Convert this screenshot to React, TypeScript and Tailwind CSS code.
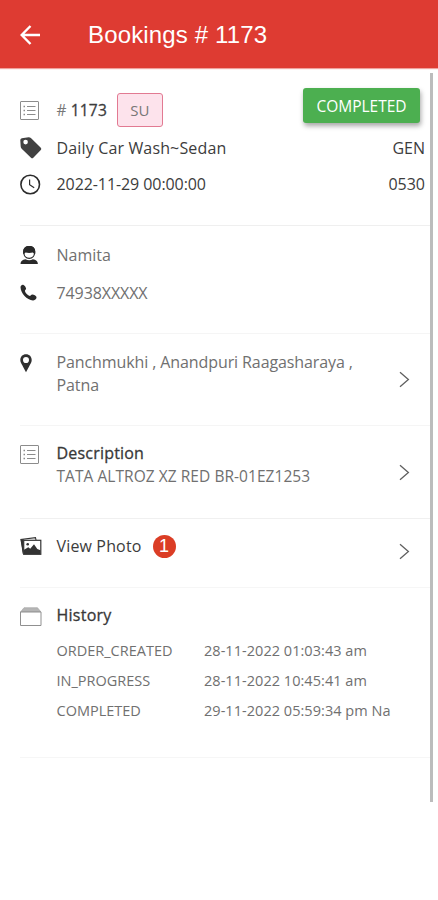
import type { ReactNode } from "react";

interface HistoryEntry {
  status: string;
  time: string;
}

const history: HistoryEntry[] = [
  { status: "ORDER_CREATED", time: "28-11-2022 01:03:43 am" },
  { status: "IN_PROGRESS", time: "28-11-2022 10:45:41 am" },
  { status: "COMPLETED", time: "29-11-2022 05:59:34 pm Na" },
];

function ListIcon() {
  return (
    <svg className="mt-[2px]" width="20" height="20" viewBox="0 0 20 20" fill="none" stroke="#8c8c8c">
      <rect x="0.5" y="0.5" width="18" height="18" rx="0.5" />
      <path d="M7 5.5h8.5M7 9.5h8.5M7 13.5h8.5" />
      <path d="M3.5 5.5h1.5M3.5 9.5h1.5M3.5 13.5h1.5" strokeWidth="1.3" />
    </svg>
  );
}

function TagIcon() {
  return (
    <svg width="22" height="22" viewBox="0 0 22 22" fill="#414141">
      <path
        fillRule="evenodd"
        d="M0.3 3.2Q0.2 1.6 1.8 1.2L8.6 0.2Q9.9 0.1 10.9 1L20.8 10.7Q21.9 11.9 20.8 13L13.3 20.8Q12.2 21.8 11 20.8L1.7 11.7Q0.8 10.8 0.7 9.6ZM5.6 2.8a2.3 2.3 0 1 0 0 4.6a2.3 2.3 0 0 0 0-4.6Z"
      />
    </svg>
  );
}

function ClockIcon() {
  return (
    <svg className="mt-px" width="22" height="22" viewBox="0 0 22 22" fill="none" stroke="#2c2c2c">
      <circle cx="10.2" cy="10.5" r="9.3" strokeWidth="1.6" />
      <path d="M9.6 5.5v5.2l4.6 3.1" strokeWidth="1.2" />
    </svg>
  );
}

function PersonIcon() {
  return (
    <svg width="19" height="20" viewBox="0 0 19 20">
      <path
        d="M3.7 6.8C3.7 3.2 5.9 1.7 9.2 1.7s5.5 1.5 5.5 5.1c0 3.8-2.3 6.6-5.5 6.6S3.7 10.6 3.7 6.8Z"
        fill="#fff"
        stroke="#292929"
        strokeWidth="1.2"
      />
      <path
        d="M3.2 9C2.6 3.6 5 1 9.2 1s6.6 2.6 6 8C14.2 8.900 13.400 8.300 12.900 7.600C10.400 8.200 7.900 8.200 5.500 7.600C5 8.300 4.300 8.800 3.200 9Z"
        fill="#292929"
      />
      <path d="M0.5 19c0.1-3 1.9-4.300 5-4.800 2.300 1.300 5.100 1.300 7.400 0 3.200 0.500 4.800 1.800 5 4.800Z" fill="#292929" />
    </svg>
  );
}

function PhoneIcon() {
  return (
    <svg width="18" height="18" viewBox="0 0 18 18" fill="#2b2b2b">
      <path d="M0.5 3.1C0.6 1.5 2 0.4 3.2 0.7C4.7 1.4 5.8 3 6.1 4.6C6.1 5.6 5 6.3 4.9 6.9C5.2 8.9 7.8 11.3 9.9 11.9C10.6 11.8 11 10.5 12.3 10.5C14.1 10.6 15.8 11.7 16.5 13.1C16.8 14.9 15 16.7 13 16.5C6.9 15.9 0.7 9.8 0.5 3.1Z" />
    </svg>
  );
}

function PinIcon() {
  return (
    <svg width="13" height="19" viewBox="0 0 13 19" fill="#303030">
      <path
        fillRule="evenodd"
        d="M6 0.3C2.6 0.3 0.3 2.7 0.3 5.9C0.3 8 1.3 9.4 2.3 11.3C3.5 13.5 4.4 15.7 6 18.2C7.6 15.7 8.5 13.5 9.7 11.3C10.7 9.4 11.7 8 11.7 5.9C11.7 2.7 9.4 0.3 6 0.3ZM6 2.9a3 3.1 0 1 1 0 6.2a3 3.1 0 0 1 0-6.2Z"
      />
    </svg>
  );
}

function PhotosIcon() {
  return (
    <svg width="22" height="19" viewBox="0 0 22 19">
      <path d="M3.4 15L0.9 2.5L15.5 0.7L16 3" fill="none" stroke="#333" strokeWidth="1.1" />
      <path d="M0.8 2.4L3.6 2.1V17.5L2.6 16.5Z" fill="#333" />
      <rect x="3.7" y="3.3" width="17.1" height="14" fill="#fff" stroke="#333" strokeWidth="1.2" />
      <path d="M4 17V12.7L8.3 10.2L10.2 11.7L14 7.2L17.3 12.1L20.5 13.3V17Z" fill="#333" />
      <circle cx="7.7" cy="7.3" r="1.3" fill="#333" />
    </svg>
  );
}

function BoxIcon() {
  return (
    <svg className="mt-[3px]" width="22" height="20" viewBox="0 0 22 20">
      <path d="M0.5 5L4 0.7H17.5L21 5Z" fill="#b5b5b5" stroke="#a0a0a0" strokeWidth="0.6" />
      <path d="M0.5 5V18.5H21V5Z" fill="#fff" stroke="#909090" />
    </svg>
  );
}

function Chevron() {
  return (
    <svg className="mr-[20px] shrink-0" width="11" height="17" viewBox="0 0 11 17" fill="none" stroke="#606060" strokeWidth="1.3">
      <path d="M1 1.2L9.4 8.5L1 15.8" />
    </svg>
  );
}

function Row({ icon, children }: { icon: ReactNode; children: ReactNode }) {
  return (
    <div className="flex items-start">
      <div className="flex h-6 w-[36.5px] shrink-0 items-center">{icon}</div>
      <div className="min-w-0 flex-1 whitespace-nowrap">{children}</div>
    </div>
  );
}

export default function App() {
  return (
    <div className="h-[900px] w-[438px] overflow-hidden bg-white font-['Open_Sans',sans-serif] text-[16px] leading-6 text-[#3c3c3c]">
      <header className="flex h-[68px] items-center bg-[#de3b32] pl-5 text-white shadow-[0_1px_1px_#f0a19c]">
        <svg className="mt-px" width="21" height="20" viewBox="0 0 21 20" fill="none" stroke="currentColor" strokeWidth="2.4">
          <path d="M20 10H2M10.5 1L1.7 10L10.5 19" />
        </svg>
        <h1 className="ml-[47px] mt-[2px] font-['Liberation_Sans',sans-serif] text-[24px] tracking-[0.15px]">
          Bookings # 1173
        </h1>
      </header>

      <div className="flex">
        <main className="w-[430px] pl-5">
          <section className="h-[158px] border-b border-[#efefef] pr-[5px] pt-[19px]">
            <div className="flex h-[46px] items-start justify-between">
              <div className="flex items-center pt-[6px]">
                <div className="w-[36.5px]">
                  <ListIcon />
                </div>
                <span className="text-[15.5px] tracking-[0.15px]">
                  <span className="text-[#777]"># </span>
                  <span className="[-webkit-text-stroke:0.3px_#3c3c3c]">1173</span>
                </span>
                <span className="ml-[10px] flex h-[34px] w-[46px] items-center justify-center rounded-[3px] border-[1.5px] border-[#e27a92] bg-[#fde3ec] text-[15px] text-[#777]">
                  SU
                </span>
              </div>
              <span className="mr-[5px] mt-px flex h-[35px] w-[117px] items-center justify-center rounded-[3px] bg-[#4caf50] text-[15.5px] text-white shadow-[1px_3px_5px_rgba(0,0,0,0.35)]">
                COMPLETED
              </span>
            </div>
            <div className="mt-[3px]">
              <Row icon={<TagIcon />}>
                <div className="flex justify-between">
                  <span className="tracking-[0.15px]">Daily Car Wash~Sedan</span>
                  <span>GEN</span>
                </div>
              </Row>
            </div>
            <div className="mt-[12px]">
              <Row icon={<ClockIcon />}>
                <div className="flex justify-between">
                  <span className="tracking-[-0.08px]">2022-11-29 00:00:00</span>
                  <span>0530</span>
                </div>
              </Row>
            </div>
          </section>

          <section className="h-[108px] border-b border-[#f5f5f5] pt-[17px] text-[#707070]">
            <Row icon={<PersonIcon />}>Namita</Row>
            <div className="mt-[14px]">
              <Row icon={<PhoneIcon />}>
                <span className="tracking-[-0.1px]">74938XXXXX</span>
              </Row>
            </div>
          </section>

          <section className="flex h-[92px] items-center justify-between border-b border-[#f5f5f5] text-[#707070]">
            <div className="h-full pt-[17px]">
              <Row icon={<PinIcon />}>
                <p className="leading-[23px] tracking-[-0.1px]">
                  Panchmukhi , Anandpuri Raagasharaya ,
                  <br />
                  Patna
                </p>
              </Row>
            </div>
            <Chevron />
          </section>

          <section className="flex h-[93px] items-center justify-between border-b border-[#f0f0f0]">
            <div className="h-full pt-[16px]">
              <Row icon={<ListIcon />}>
                <h2 className="leading-[23px] tracking-[0.2px] text-[#383838] [-webkit-text-stroke:0.3px_#383838]">
                  Description
                </h2>
                <p className="text-[15.5px] leading-[23px] tracking-[0.05px] text-[#707070]">
                  TATA ALTROZ XZ RED BR-01EZ1253
                </p>
              </Row>
            </div>
            <Chevron />
          </section>

          <section className="flex h-[69px] items-center justify-between border-b border-[#f6f6f6]">
            <div className="h-full pt-[15px]">
              <Row icon={<PhotosIcon />}>
                <div className="flex items-center">
                  <span className="tracking-[0.15px]">View Photo</span>
                  <span className="ml-[11px] flex size-[23px] items-center justify-center rounded-full bg-[#db3d25] font-['Liberation_Sans',sans-serif] text-[18px] text-white">
                    1
                  </span>
                </div>
              </Row>
            </div>
            <div className="pb-[3px]">
              <Chevron />
            </div>
          </section>

          <section className="h-[170px] border-b border-[#f6f6f6] pt-[15px]">
            <Row icon={<BoxIcon />}>
              <h2 className="tracking-[0.25px] text-[#383838] [-webkit-text-stroke:0.3px_#383838]">History</h2>
            </Row>
            <div className="ml-[36.5px] mt-[9px] text-[14.5px] leading-[30px] text-[#707070]">
              {history.map((entry) => (
                <div key={entry.status} className="flex">
                  <span className="w-[147.5px]">{entry.status}</span>
                  <span className="tracking-[0.04px]">{entry.time}</span>
                </div>
              ))}
            </div>
          </section>
        </main>
        <div className="mt-[5px] h-[729px] w-[3px] bg-[#bcbcbc]" />
      </div>
    </div>
  );
}
